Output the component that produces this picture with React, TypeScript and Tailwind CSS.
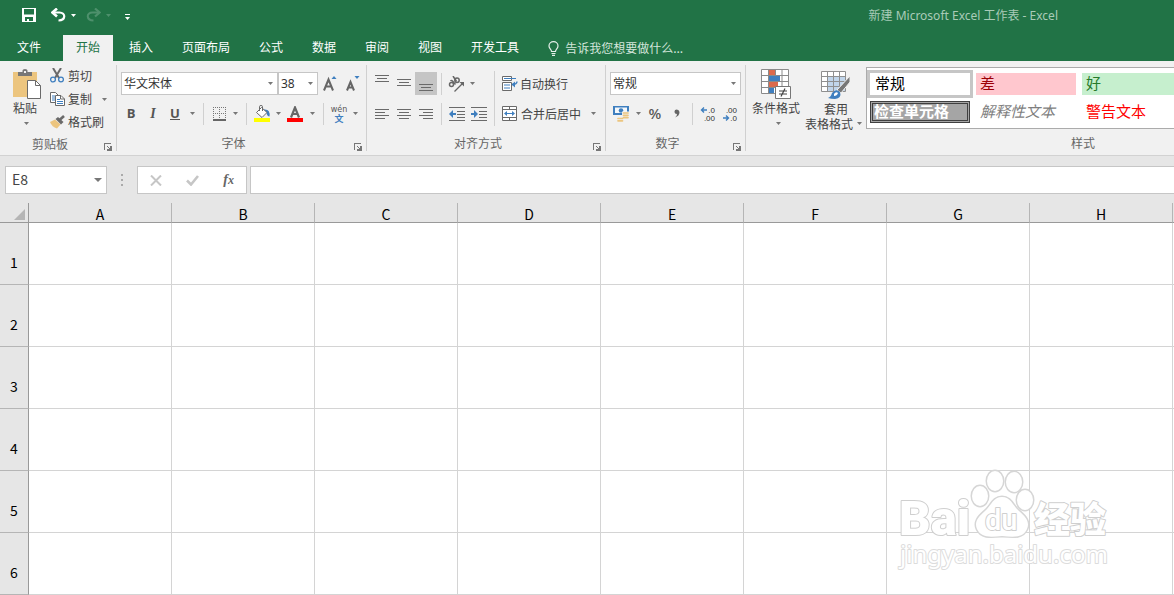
import type { ReactNode } from "react";
import clsx from "clsx";

const TABS = ["插入", "页面布局", "公式", "数据", "审阅", "视图", "开发工具"];
const COLUMNS = ["A", "B", "C", "D", "E", "F", "G", "H", "I", "J", "K", "L"];
const ROWS = [1, 2, 3, 4, 5, 6];

const GRAY = "#6a6a6a";
const BLUE = "#3f7fbf";
const TAN = "#ecc57f";

function Caret({ className = "text-[#777]" }: { className?: string }) {
  return (
    <svg width="5" height="3" viewBox="0 0 5 3" className={clsx("shrink-0", className)}>
      <path d="M0 0h5L2.5 3z" fill="currentColor" />
    </svg>
  );
}

function CaretButton({ label, className }: { label: string; className?: string }) {
  return (
    <button aria-label={label} className="flex h-[23px] w-3 shrink-0 items-center justify-center">
      <Caret className={className} />
    </button>
  );
}

interface ToolButtonProps {
  label: string;
  className?: string;
  children: ReactNode;
}

function ToolButton({ label, className = "w-[22px]", children }: ToolButtonProps) {
  return (
    <button
      aria-label={label}
      className={clsx("flex h-[23px] shrink-0 items-center justify-center", className)}
    >
      {children}
    </button>
  );
}

function Separator({ className = "h-[22px] w-[9px]" }: { className?: string }) {
  return (
    <div className={clsx("flex shrink-0 justify-center", className)}>
      <div className="w-px bg-[#d0d0d0]" />
    </div>
  );
}

function Combo({ label, value, className }: { label: string; value: string; className: string }) {
  return (
    <div className={clsx("relative h-[23px] shrink-0", className)}>
      <select
        aria-label={label}
        defaultValue={value}
        className="block h-full w-full appearance-none border border-[#c6c6c6] bg-white pl-[2px] font-['Noto_Sans','Noto_Sans_CJK_SC',sans-serif] text-xs leading-5 text-[#333]"
      >
        <option>{value}</option>
      </select>
      <div className="pointer-events-none absolute inset-y-0 right-[5px] flex items-center">
        <Caret />
      </div>
    </div>
  );
}

interface GroupProps {
  title: string;
  className: string;
  launcher?: boolean;
  children: ReactNode;
}

function Group({ title, className, launcher = true, children }: GroupProps) {
  return (
    <section className={clsx("relative flex shrink-0 flex-col", className)}>
      <div className="flex h-[72px]">{children}</div>
      <h2 className={clsx("pt-[2px] text-center text-xs leading-4 text-[#666]", launcher && "pr-4")}>
        {title}
      </h2>
      {launcher && (
        <button aria-label={`${title}设置`} className="absolute right-1 bottom-0">
          <svg width="8" height="8" viewBox="0 0 8 8" fill="none" shapeRendering="crispEdges">
            <path d="M.5 7V.5H7M3 3l3 3" stroke="#777" />
            <path d="M7 3v4H3" stroke="#777" strokeWidth="1.6" />
          </svg>
        </button>
      )}
    </section>
  );
}

function Lines({ rows }: { rows: [number, number, number][] }) {
  return (
    <svg width="14" height="17" viewBox="0 0 14 17" shapeRendering="crispEdges">
      {rows.map(([x, y, w]) => (
        <rect key={y} x={x} y={y} width={w} height="1" fill={GRAY} />
      ))}
    </svg>
  );
}

function IndentIcon({ right = false }: { right?: boolean }) {
  return (
    <svg width="16" height="14" viewBox="0 0 16 14">
      <path
        d="M0 .5h16M8 4.5h8M8 7.5h8M8 10.5h8M0 13.5h16"
        stroke={GRAY}
        shapeRendering="crispEdges"
      />
      <path
        d={right ? "M0 6h3V3l4 4-4 4V8H0z" : "M7 6H4V3L0 7l4 4V8h3z"}
        fill={BLUE}
      />
    </svg>
  );
}

function TitleBar() {
  return (
    <header className="flex h-[35px] items-start justify-between pr-[116px] pl-[22px] text-white">
      <div className="flex h-[30px] items-center">
        <button aria-label="保存">
          <svg width="14" height="14" viewBox="0 0 14 14">
            <path
              fillRule="evenodd"
              d="M0 0h14v14H0zM2 1v5.500h10V1zM3 9v4h2v-2h2v2h4V9z"
              fill="#fff"
            />
          </svg>
        </button>
        <button aria-label="撤消" className="ml-[15px]">
          <svg width="15" height="14" viewBox="0 0 15 14" fill="none">
            <path d="M2 4.500h6.500c6.500 0 6.500 7.800-1 8" stroke="#fff" strokeWidth="2.200" />
            <path d="M6 0.500L1.500 4.500L6 8.500" stroke="#fff" strokeWidth="2.600" />
          </svg>
        </button>
        <div className="ml-[1px]">
          <CaretButton label="撤消列表" className="text-white" />
        </div>
        <button aria-label="恢复" className="ml-[7px]">
          <svg width="15" height="14" viewBox="0 0 15 14" fill="none">
            <path d="M13 4.500H6.500c-6.500 0-6.500 7.800 1 8" stroke="#4e906c" strokeWidth="2" />
            <path d="M9 0.500l4.500 4L9 8.500" stroke="#4e906c" strokeWidth="2.200" />
          </svg>
        </button>
        <div className="ml-[1px]">
          <CaretButton label="恢复列表" className="text-[#4e906c]" />
        </div>
        <button aria-label="自定义快速访问工具栏" className="mt-1 ml-[11px]">
          <svg width="5" height="6" viewBox="0 0 5 6">
            <path d="M0 0h5v1H0zM0 3h5L2.500 6z" fill="#fff" />
          </svg>
        </button>
      </div>
      <h1 className="pt-2 font-['Noto_Sans','Noto_Sans_CJK_SC',sans-serif] text-xs text-[#a9cbb8]">
        新建 Microsoft Excel 工作表 - Excel
      </h1>
    </header>
  );
}

function RibbonTabs() {
  return (
    <nav className="flex h-[26px] gap-[3px] text-xs text-white">
      <button className="mr-[2px] w-[58px] pb-[2px]">文件</button>
      <button className="bg-[#f1f1f1] px-[13px] pb-[2px] text-[#217346]">开始</button>
      {TABS.map((tab) => (
        <button key={tab} className="px-[13px] pb-[2px]">
          {tab}
        </button>
      ))}
      <button className="flex items-center gap-[6px] pl-[13px] text-[#d3e5db]">
        <svg width="11" height="15" viewBox="0 0 11 15" fill="none" stroke="#e6f0ea" strokeWidth="1.200">
          <path d="M3.500 10.500C3.500 8.500 1 7.800 1 5a4.500 4.300 0 0 1 9 0c0 2.800-2.500 3.500-2.500 5.500zM3.500 12.500h4M4 14.400h3" />
        </svg>
        告诉我您想要做什么...
      </button>
    </nav>
  );
}

function ClipboardGroup() {
  return (
    <Group title="剪贴板" className="w-[117px] border-r border-[#d0d0d0]">
      <button className="flex w-[50px] flex-col items-center pt-1 text-xs leading-4 text-[#444]">
        <svg width="28" height="30" viewBox="0 0 28 30" className="ml-1">
          <path d="M0 3h24v25H0z" fill={TAN} />
          <path d="M5 3h4.500V1.500Q9.500 0 12 0t2.500 1.500V3H19v4H5z" fill="#777" />
          <path d="M11 2h2v2h-2z" fill="#f1f1f1" />
          <path d="M14.500 11.500h8l5 5v13h-13z" fill="#fff" stroke={GRAY} />
          <path d="M22.500 11.500v5h5" fill="none" stroke={GRAY} />
        </svg>
        <span className="mt-px">粘贴</span>
        <Caret className="mt-[6px] ml-[3px] text-[#777]" />
      </button>
      <div className="flex flex-1 flex-col text-xs whitespace-nowrap text-[#444]">
        <button className="flex h-[23px] items-center gap-1 pb-[2px]">
          <svg width="14" height="15" viewBox="0 0 14 15" fill="none">
            <path d="M3 0l6 10M11 0L5 10" stroke={GRAY} strokeWidth="2" />
            <circle cx="3" cy="11.500" r="2.400" stroke={BLUE} strokeWidth="1.300" />
            <circle cx="11" cy="11.500" r="2.400" stroke={BLUE} strokeWidth="1.300" />
          </svg>
          剪切
        </button>
        <div className="flex items-center justify-between pr-[6px]">
          <button className="flex h-[23px] items-center gap-[3px] pb-[2px]">
            <svg width="15" height="14" viewBox="0 0 15 14">
              <path d="M.5.500h5l3 3v7h-8z" fill="#fff" stroke={GRAY} />
              <path d="M2 4h3M2 6h3M2 8h3" stroke={BLUE} />
              <path d="M5.500 3.500h5.500l3.500 3.500v6.500h-9z" fill="#fff" stroke={GRAY} />
              <path d="M10.500 3.500V7h4" fill="none" stroke={GRAY} />
              <path d="M7 7.500h3M7 9.500h6M7 11.500h6" stroke={BLUE} />
            </svg>
            复制
          </button>
          <CaretButton label="复制选项" />
        </div>
        <button className="flex h-[23px] items-center gap-[2px] pb-[2px]">
          <svg width="16" height="14" viewBox="0 0 16 14">
            <path d="M0 7l5-2.500 5.500 5L7 13.500Q2 12 0 7z" fill={TAN} />
            <path d="M5.500 4l2.500-2 5.500 5-2.500 2.500z" fill={GRAY} />
            <path d="M9.500 5L14 1" stroke={GRAY} strokeWidth="2.600" />
          </svg>
          格式刷
        </button>
      </div>
    </Group>
  );
}

function FontGroup() {
  return (
    <Group title="字体" className="w-[250px] border-r border-[#d0d0d0]">
      <div className="flex flex-col gap-[7px] pt-[7px] pl-[3px]">
        <div className="flex pl-[1px]">
          <Combo label="字体" value="华文宋体" className="w-[157px]" />
          <Combo label="字号" value="38" className="w-10" />
          <ToolButton label="增大字号" className="w-6">
            <svg width="14" height="17" viewBox="0 0 14 17">
              <path d="M1 15.500L5.500 4.500L10 15.500M2.500 11.500h6" fill="none" stroke="#666" strokeWidth="2" />
              <path d="M8.500 4L11 1l2.500 3z" fill={BLUE} />
            </svg>
          </ToolButton>
          <ToolButton label="减小字号">
            <svg width="14" height="17" viewBox="0 0 14 17">
              <path d="M1 15.500L4.500 7L8 15.500M2.500 12.500h4" fill="none" stroke="#666" strokeWidth="2" />
              <path d="M8.500 1L11 4l2.500-3z" fill={BLUE} />
            </svg>
          </ToolButton>
        </div>
        <div className="flex items-center text-[13px] text-[#555]">
          <ToolButton label="加粗">
            <b className="font-['Open_Sans',sans-serif]">B</b>
          </ToolButton>
          <ToolButton label="倾斜">
            <i className="font-['Liberation_Serif',serif] text-sm font-bold">I</i>
          </ToolButton>
          <ToolButton label="下划线">
            <b className="border-b border-[#555] font-['Open_Sans',sans-serif] leading-3">U</b>
          </ToolButton>
          <CaretButton label="下划线样式" />
          <Separator className="h-[22px] w-[11px]" />
          <ToolButton label="边框" className="w-5">
            <svg width="13" height="14" viewBox="0 0 13 14" shapeRendering="crispEdges">
              <path
                d="M0 .5h13M0 6.500h13M.5 0v13M6.500 0v13M12.500 0v13"
                stroke="#777"
                strokeDasharray="1 1"
              />
              <path d="M0 13h13" stroke="#666" strokeWidth="1.500" />
            </svg>
          </ToolButton>
          <CaretButton label="边框样式" />
          <Separator className="h-[22px] w-[11px]" />
          <ToolButton label="填充颜色" className="w-5">
            <svg width="17" height="17" viewBox="0 0 17 17">
              <path d="M9.500 4.500q7-1 6 7-2.500 0-3-4z" fill={BLUE} />
              <path d="M2.500 7.500l5-5 5.500 5-5 5z" fill="#fff" stroke={GRAY} />
              <path d="M5.500 6V1.500q0-1 1.500-1t1.500 1V6" fill="none" stroke={GRAY} />
              <path d="M0 13h16v4H0z" fill="#ff0" />
            </svg>
          </ToolButton>
          <CaretButton label="选择填充颜色" />
          <ToolButton label="字体颜色">
            <svg width="16" height="16" viewBox="0 0 16 16">
              <path d="M4 11.500L8 1.500l4 10M5.500 8h5" fill="none" stroke="#666" strokeWidth="2.200" />
              <path d="M0 12h16v4H0z" fill="#f00" />
            </svg>
          </ToolButton>
          <CaretButton label="选择字体颜色" />
          <Separator className="h-[22px] w-[11px]" />
          <ToolButton label="拼音指南" className="w-5 flex-col">
            <span className="font-['DejaVu_Sans',sans-serif] text-[8px] leading-[9px]">wén</span>
            <span className="text-[9px] leading-[9px] font-bold text-[#3f7fbf]">文</span>
          </ToolButton>
          <CaretButton label="拼音选项" />
        </div>
      </div>
    </Group>
  );
}

function AlignmentGroup() {
  return (
    <Group title="对齐方式" className="w-[239px] border-r border-[#d0d0d0]">
      <div className="flex flex-col gap-[7px] pt-[7px] pl-1">
        <div className="flex items-center">
          <ToolButton label="顶端对齐">
            <Lines rows={[[0, 0, 14], [2, 3, 10], [0, 6, 14]]} />
          </ToolButton>
          <ToolButton label="垂直居中">
            <Lines rows={[[0, 4, 14], [2, 7, 10], [0, 10, 14]]} />
          </ToolButton>
          <ToolButton label="底端对齐" className="w-[22px] bg-[#c5c5c5]">
            <Lines rows={[[0, 9, 14], [2, 12, 10], [0, 15, 14]]} />
          </ToolButton>
          <Separator />
          <ToolButton label="方向" className="w-5">
            <svg width="17" height="16" viewBox="0 0 17 16" fill="none" stroke="#666">
              <circle cx="3.500" cy="8.500" r="2" strokeWidth="1.500" />
              <path d="M2.500 5q1-1 2 0l3 3.500" strokeWidth="1.500" />
              <circle cx="9" cy="4.300" r="2.200" strokeWidth="1.500" />
              <path d="M5 0l3.500 5.500" strokeWidth="1.500" />
              <path d="M6.500 15.500l8-8" strokeWidth="1.300" />
              <path d="M11.500 6H16v4.500z" fill="#666" stroke="none" />
            </svg>
          </ToolButton>
          <CaretButton label="方向选项" />
        </div>
        <div className="flex items-center">
          <ToolButton label="左对齐">
            <Lines rows={[[0, 4, 14], [0, 7, 10], [0, 10, 14], [0, 13, 10]]} />
          </ToolButton>
          <ToolButton label="居中">
            <Lines rows={[[0, 4, 14], [2, 7, 10], [0, 10, 14], [2, 13, 10]]} />
          </ToolButton>
          <ToolButton label="右对齐">
            <Lines rows={[[0, 4, 14], [4, 7, 10], [0, 10, 14], [4, 13, 10]]} />
          </ToolButton>
          <Separator />
          <ToolButton label="减少缩进量">
            <IndentIcon />
          </ToolButton>
          <ToolButton label="增加缩进量">
            <IndentIcon right />
          </ToolButton>
        </div>
      </div>
      <Separator className="mt-[6px] h-[55px] w-[9px]" />
      <div className="flex flex-col gap-[7px] pt-[7px] pl-[3px] text-xs text-[#444]">
        <button className="flex h-[23px] items-center gap-[2px]">
          <svg width="16" height="15" viewBox="0 0 16 15" fill="none">
            <path d="M.5.500h9v4h-9zM.5 6.500h9v8h-9z" fill="#fff" stroke={GRAY} />
            <path d="M2 2.500h12M2 9h6M2 12h6" stroke={BLUE} />
            <path d="M15 5.500q0 3-5 3" stroke={BLUE} strokeWidth="1.400" />
            <path d="M13 5.500L9.500 8.500l3.500 3z" fill={BLUE} />
          </svg>
          自动换行
        </button>
        <div className="flex gap-[6px]">
          <button className="flex h-[23px] items-center gap-[3px]">
            <svg width="16" height="15" viewBox="0 0 16 15" fill="none">
              <path d="M.5.500h14v14H.5z" fill="#fff" stroke={GRAY} />
              <path d="M0 3.500h15M0 11.500h15M7.500 0v3M7.500 12v3" stroke={GRAY} />
              <path d="M3 7.500h9" stroke={BLUE} />
              <path d="M5 5L2 7.500 5 10zM10 5l3 2.500-3 2.500z" fill={BLUE} />
            </svg>
            合并后居中
          </button>
          <CaretButton label="合并选项" />
        </div>
      </div>
    </Group>
  );
}

function DecimalIcon({ increase = false }: { increase?: boolean }) {
  return (
    <svg width="16" height="18" viewBox="0 0 16 18" fontFamily="Liberation Sans, sans-serif" fontSize="8">
      <text x="15" y="8" textAnchor="end" fill="#333">
        {increase ? ".0" : ".00"}
      </text>
      <text x="15" y="16" textAnchor="end" fill="#333">
        {increase ? ".00" : ".0"}
      </text>
      <path
        d={increase ? "M7 5H2M4 2.500L1.500 5 4 7.500" : "M1 13h5M4 10.500L6.500 13 4 15.500"}
        fill="none"
        stroke={BLUE}
        strokeWidth="1.400"
      />
    </svg>
  );
}

function NumberGroup() {
  return (
    <Group title="数字" className="w-[140px] border-r border-[#d0d0d0]">
      <div className="flex flex-col gap-[7px] pt-[7px] pl-1">
        <Combo label="数字格式" value="常规" className="w-[131px]" />
        <div className="flex items-center text-[#555]">
          <ToolButton label="会计数字格式">
            <svg width="17" height="17" viewBox="0 0 17 17">
              <path d="M0 1h16v9H0z" fill={BLUE} />
              <path d="M2 2.500h12v5.500H2z" fill="#f4f8fc" />
              <circle cx="8" cy="5.500" r="2.300" fill={BLUE} />
              <path d="M9 6.500h8V17H4v-5h5z" fill="#f1f1f1" />
              <path
                d="M10.500 8h4.500M10.500 10.300h4.500M10.500 12.600h4.500M5 13.500h4.500M5 15.800h4.500"
                stroke={TAN}
                strokeWidth="1.700"
                strokeLinecap="round"
              />
            </svg>
          </ToolButton>
          <CaretButton label="会计格式选项" />
          <ToolButton label="百分比样式">
            <span className="font-['Noto_Sans',sans-serif] text-[15px] font-medium">%</span>
          </ToolButton>
          <ToolButton label="千位分隔样式">
            <svg width="6" height="9" viewBox="0 0 6 9">
              <path d="M.5 2.500Q.5.500 2.800.500T5.500 3Q5.500 7 1 8.500 3 7 3 5 .5 5 .5 2.500z" fill="#666" />
            </svg>
          </ToolButton>
          <Separator />
          <ToolButton label="增加小数位数">
            <DecimalIcon increase />
          </ToolButton>
          <ToolButton label="减少小数位数">
            <DecimalIcon />
          </ToolButton>
        </div>
      </div>
    </Group>
  );
}

function StylesGroup() {
  return (
    <Group title="样式" className="w-[674px]" launcher={false}>
      <button className="flex w-[60px] shrink-0 flex-col items-center pt-1 text-xs leading-4 text-[#444]">
        <svg width="30" height="30" viewBox="0 0 30 30">
          <path d="M.5.500h27v24H.5z" fill="#fff" />
          <path
            d="M.5.500h27v24H.5zM7.500 0v25M14.500 0v25M21 0v25M0 6.500h28M0 12.500h28M0 18.500h28"
            fill="none"
            stroke="#8a8a8a"
          />
          <path d="M8 1h6v5H8zM8 13h9v5H8z" fill="#dc6a4c" />
          <path d="M8 7h11v5H8zM8 19h5v5H8z" fill={BLUE} />
          <path d="M14.500 17.500h15v12h-15z" fill="#fff" stroke="#777" />
          <path d="M18 22h8M18 25h8M24 19.500l-4 8" stroke="#444" strokeWidth="1.200" />
        </svg>
        <span className="mt-px">条件格式</span>
        <Caret className="mt-[6px] ml-1 text-[#777]" />
      </button>
      <button className="flex w-[60px] shrink-0 flex-col items-center pt-1 text-xs leading-[15px] text-[#444]">
        <svg width="30" height="30" viewBox="0 0 30 30">
          <path d="M.5 2.500h24v20H.5z" fill="#fff" />
          <path d="M7 8h17v14H7z" fill="#c1d5ea" />
          <path
            d="M.5 2.500h24v20H.5zM6.500 2v20M12.500 2v20M18.500 2v20M0 7.500h25M0 12.500h25M0 17.500h25"
            fill="none"
            stroke="#8f8f8f"
          />
          <path d="M29 7v6l-9 11-4-3z" fill="#777" stroke="#f1f1f1" />
          <path d="M7 29q3-1 4-5 4-5 8-1 2 6-5 7-4 0-7-1z" fill={BLUE} />
          <path d="M13 25q2-3 4-1-1 3-4 3z" fill="#fff" />
        </svg>
        <span className="mt-[2px]">套用</span>
        <span className="flex items-center gap-1 self-end pr-1 whitespace-nowrap">
          表格格式
          <Caret />
        </span>
      </button>
      <div className="mt-[2px] flex h-[62px] flex-1 border border-[#ababab] bg-white text-[15px] leading-5">
        <div className="grid auto-rows-[22px] grid-cols-[repeat(5,100px)] gap-x-[6px] gap-y-[6px] pt-[5px] pl-[3px]">
          <button className="bg-white pb-1 pl-[5px] text-left text-black outline-3 outline-[#c6c6c6]">常规</button>
          <button className="bg-[#ffc7ce] pb-1 pl-1 text-left text-[#9c0006]">差</button>
          <button className="bg-[#c6efce] pb-1 pl-1 text-left text-[#267a2b]">好</button>
          <button className="bg-[#ffeb9c] pb-1 pl-1 text-left text-[#9c6500]">适中</button>
          <button className="bg-[#f2f2f2] pb-1 pl-1 text-left text-[#fa7d00]">计算</button>
          <button className="flex items-center border-3 border-double border-[#3f3f3f] bg-[#a5a5a5] pb-[2px] pl-[1px] font-bold text-white">
            检查单元格
          </button>
          <button className="pb-1 pl-1 text-left text-[#7f7f7f] italic">解释性文本</button>
          <button className="pb-1 pl-1 text-left text-[#f00]">警告文本</button>
          <button className="pb-1 pl-1 text-left text-[#fa7d00]">链接单元格</button>
          <button className="bg-[#f2f2f2] pb-1 pl-1 text-left text-[#3f3f3f]">输出</button>
        </div>
      </div>
    </Group>
  );
}

function FormulaBar() {
  return (
    <div className="flex h-[47px] items-start bg-[#e6e6e6] pt-[10px] pl-[5px]">
      <div className="relative h-7 w-[102px] shrink-0">
        <input
          aria-label="名称框"
          defaultValue="E8"
          className="h-full w-full border border-[#c6c6c6] bg-white pb-[2px] pl-[6px] text-sm text-[#444]"
        />
        <button aria-label="名称列表" className="absolute inset-y-0 right-[5px]">
          <svg width="8" height="4" viewBox="0 0 8 4">
            <path d="M0 0h8L4 4z" fill="#777" />
          </svg>
        </button>
      </div>
      <div className="flex h-7 w-[30px] shrink-0 flex-col items-center justify-center gap-[3px]">
        <i className="size-[2px] bg-[#aaa]" />
        <i className="size-[2px] bg-[#aaa]" />
        <i className="size-[2px] bg-[#aaa]" />
      </div>
      <div className="flex h-7 w-[110px] shrink-0 items-center justify-around border border-[#c6c6c6] bg-white">
        <button aria-label="取消">
          <svg width="12" height="11" viewBox="0 0 12 11">
            <path d="M1 .5l10 10M11 .5l-10 10" stroke="#c6c6c6" strokeWidth="2" />
          </svg>
        </button>
        <button aria-label="输入">
          <svg width="13" height="11" viewBox="0 0 13 11">
            <path d="M1 5.500l4 4L12 1" fill="none" stroke="#c6c6c6" strokeWidth="2.600" />
          </svg>
        </button>
        <button
          aria-label="插入函数"
          className="font-['Liberation_Serif',serif] text-sm leading-5 font-bold text-[#666] italic"
        >
          f<span className="text-xs">x</span>
        </button>
      </div>
      <input
        aria-label="编辑栏"
        className="ml-[3px] h-7 min-w-0 flex-1 border border-r-0 border-[#c6c6c6] bg-white px-2 text-sm"
      />
    </div>
  );
}

function Sheet() {
  return (
    <div className="overflow-hidden bg-white">
      <table className="w-[1745px] table-fixed border-separate border-spacing-0 text-sm text-black">
        <colgroup>
          <col className="w-[29px]" />
        </colgroup>
        <thead>
          <tr className="h-5 bg-[#e6e6e6]">
            <th aria-label="全选" className="border-r border-b border-r-[#999] border-b-[#999] p-0">
              <svg width="11" height="11" viewBox="0 0 11 11" className="mt-[3px] ml-[14px]">
                <path d="M11 0v11H0z" fill="#b5b5b5" />
              </svg>
            </th>
            {COLUMNS.map((name) => (
              <th
                key={name}
                className="border-r border-b border-r-[#b5b5b5] border-b-[#999] p-0 pt-[3px] leading-4 font-normal"
              >
                {name}
              </th>
            ))}
          </tr>
        </thead>
        <tbody>
          {ROWS.map((row) => (
            <tr key={row} className="h-[62px]">
              <th className="border-r border-b border-r-[#999] border-b-[#b5b5b5] bg-[#e6e6e6] p-0 pt-4 font-normal">
                {row}
              </th>
              {COLUMNS.map((name) => (
                <td key={name} className="border-r border-b border-[#d4d4d4] p-0" />
              ))}
            </tr>
          ))}
        </tbody>
      </table>
    </div>
  );
}

function Watermark() {
  return (
    <svg
      width="220"
      height="110"
      viewBox="0 0 220 110"
      className="pointer-events-none absolute right-[58px] bottom-[19px]"
      fill="#fff"
      stroke="#cfcfcf"
      strokeWidth="2"
      strokeLinejoin="round"
      paintOrder="stroke"
    >
      <text x="3" y="69" fontFamily="Roboto, sans-serif" fontSize="49" fontWeight="900">
        Bai
      </text>
      <g stroke="#d6d6d6" strokeWidth="3">
        <ellipse cx="84" cy="30" rx="8" ry="10" />
        <ellipse cx="99" cy="15" rx="8" ry="10" />
        <ellipse cx="118" cy="16" rx="8" ry="10" />
        <ellipse cx="129" cy="34" rx="8" ry="10" />
        <path d="M106 31c-9 0-11 9-17 14-7 6-11 11-8 18 4 9 13 8 25 7 12 1 21 2 25-7 3-7-1-12-8-18-6-5-8-14-17-14z" />
      </g>
      <text x="89" y="64" fontFamily="Roboto, sans-serif" fontSize="29" fontWeight="500">
        du
      </text>
      <text x="138" y="67" fontFamily="Noto Sans CJK SC, sans-serif" fontSize="36" fontWeight="900">
        经验
      </text>
      <text x="4" y="97" fontFamily="Noto Sans, sans-serif" fontSize="24" stroke="#dcdcdc">
        jingyan.baidu.com
      </text>
    </svg>
  );
}

export default function App() {
  return (
    <div className="relative min-h-screen overflow-hidden bg-[#e6e6e6] font-['Noto_Sans_CJK_SC',sans-serif]">
      <div className="bg-[#217346]">
        <TitleBar />
        <RibbonTabs />
      </div>
      <div className="flex h-[95px] overflow-hidden border-b border-[#d2d2d2] bg-[#f1f1f1] pt-1 pb-1">
        <ClipboardGroup />
        <FontGroup />
        <AlignmentGroup />
        <NumberGroup />
        <StylesGroup />
      </div>
      <FormulaBar />
      <Sheet />
      <Watermark />
    </div>
  );
}
